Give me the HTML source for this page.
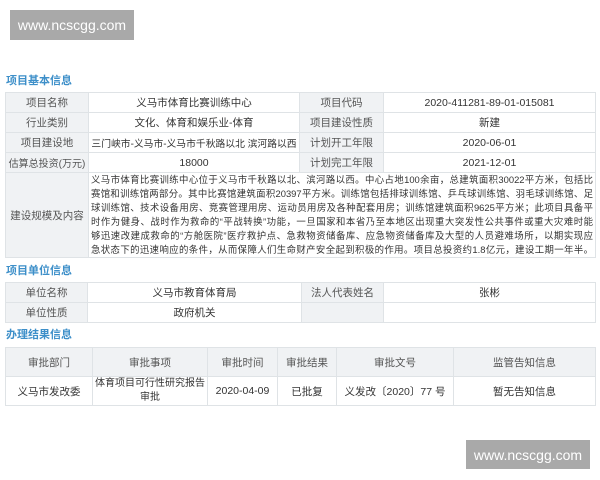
<!DOCTYPE html>
<html><head><meta charset="utf-8"><style>
*{margin:0;padding:0;box-sizing:border-box}
body{width:600px;height:480px;background:#fff;position:relative;overflow:hidden;font-family:"Liberation Sans","Noto Sans CJK SC",sans-serif;color:#333;font-size:10.5px}
.wm{position:absolute;background:#a9a9a9;color:#fff;font-size:14px;display:flex;align-items:center;justify-content:center}
.h{position:absolute;left:6px;color:#3d8fc9;font-size:11px;font-weight:bold}
table{position:absolute;left:5px;width:591px;border-collapse:collapse;table-layout:fixed}
td{border:1px solid #dfe3e6;text-align:center;padding:0;white-space:nowrap;overflow:hidden}
td.l{background:#f0f2f4;color:#555}
.big{vertical-align:middle;padding:0 3px 0 2px}
.big div{width:502px;overflow:hidden;white-space:nowrap;text-align:justify;text-align-last:justify;font-size:9.4px;line-height:14px}
</style></head><body>
<div class="wm" style="left:10px;top:10px;width:124px;height:30px">www.ncscgg.com</div>
<div class="h" style="top:72px">项目基本信息</div>
<table style="top:92px">
<colgroup><col style="width:83px"><col style="width:211px"><col style="width:84px"><col></colgroup>
<tr style="height:20px"><td class="l">项目名称</td><td>义马市体育比赛训练中心</td><td class="l">项目代码</td><td>2020-411281-89-01-015081</td></tr>
<tr style="height:20px"><td class="l">行业类别</td><td>文化、体育和娱乐业-体育</td><td class="l">项目建设性质</td><td>新建</td></tr>
<tr style="height:20px"><td class="l">项目建设地</td><td style="font-size:9.8px">三门峡市-义马市-义马市千秋路以北 滨河路以西</td><td class="l">计划开工年限</td><td>2020-06-01</td></tr>
<tr style="height:20px"><td class="l" style="font-size:10px">估算总投资(万元)</td><td>18000</td><td class="l">计划完工年限</td><td>2021-12-01</td></tr>
<tr style="height:84px"><td class="l">建设规模及内容</td><td colspan="3" class="big">
<div>义马市体育比赛训练中心位于义马市千秋路以北、滨河路以西。中心占地100余亩，总建筑面积30022平方米，包括比</div>
<div>赛馆和训练馆两部分。其中比赛馆建筑面积20397平方米。训练馆包括排球训练馆、乒乓球训练馆、羽毛球训练馆、足</div>
<div>球训练馆、技术设备用房、竞赛管理用房、运动员用房及各种配套用房；训练馆建筑面积9625平方米；此项目具备平</div>
<div>时作为健身、战时作为救命的“平战转换”功能，一旦国家和本省乃至本地区出现重大突发性公共事件或重大灾难时能</div>
<div>够迅速改建成救命的“方舱医院”医疗救护点、急救物资储备库、应急物资储备库及大型的人员避难场所，以期实现应</div>
<div>急状态下的迅速响应的条件，从而保障人们生命财产安全起到积极的作用。项目总投资约1.8亿元，建设工期一年半。</div>
</td></tr>
</table>
<div class="h" style="top:262px">项目单位信息</div>
<table style="top:282px">
<colgroup><col style="width:82px"><col style="width:214px"><col style="width:82px"><col></colgroup>
<tr style="height:20px"><td class="l">单位名称</td><td>义马市教育体育局</td><td class="l">法人代表姓名</td><td>张彬</td></tr>
<tr style="height:20px"><td class="l">单位性质</td><td>政府机关</td><td class="l"></td><td></td></tr>
</table>
<div class="h" style="top:326px">办理结果信息</div>
<table style="top:347px">
<colgroup><col style="width:87px"><col style="width:115px"><col style="width:70px"><col style="width:59px"><col style="width:117px"><col></colgroup>
<tr style="height:29px"><td class="l">审批部门</td><td class="l">审批事项</td><td class="l">审批时间</td><td class="l">审批结果</td><td class="l">审批文号</td><td class="l">监管告知信息</td></tr>
<tr style="height:29px"><td>义马市发改委</td><td style="line-height:14px;font-size:10px">体育项目可行性研究报告<br>审批</td><td>2020-04-09</td><td>已批复</td><td>义发改〔2020〕77 号</td><td>暂无告知信息</td></tr>
</table>
<div class="wm" style="left:466px;top:440px;width:124px;height:29px">www.ncscgg.com</div>
</body></html>
